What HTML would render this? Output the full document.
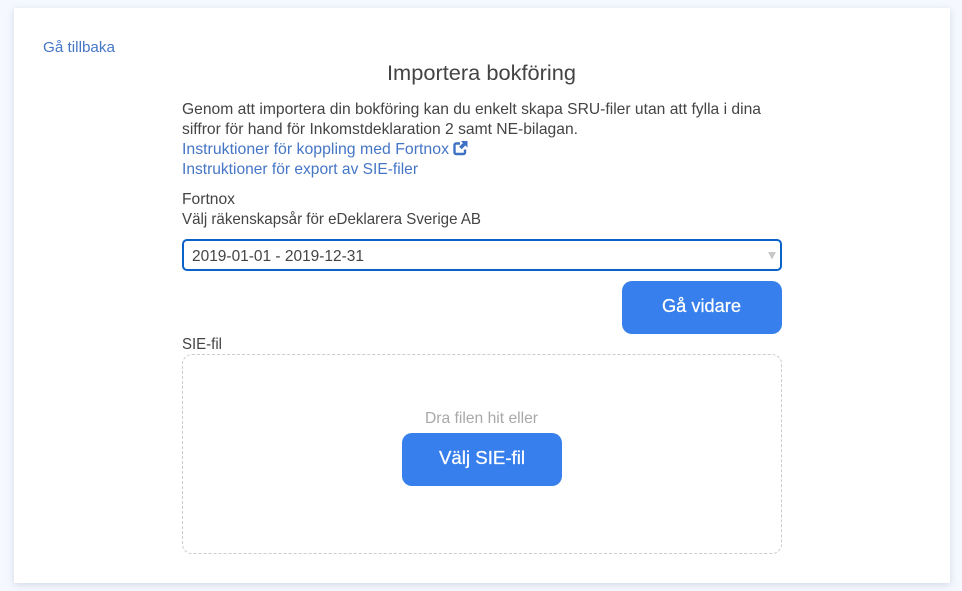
<!DOCTYPE html>
<html lang="sv">
<head>
<meta charset="utf-8">
<title>Importera bokföring</title>
<style>
html,body{margin:0;padding:0;width:962px;height:591px;overflow:hidden;background:#f5f8ff}
#card{position:absolute;left:14px;top:8px;width:936px;height:575px;background:#fff;box-shadow:0 2px 7px rgba(120,130,150,.26)}
#sel{position:absolute;left:182px;top:239px;width:596px;height:28px;border:2px solid #0a62c9;border-radius:5px;background:#fff}
.btn{position:absolute;width:160px;height:53px;background:#377fec;border-radius:10px}
#drop{position:absolute;left:182px;top:354px;width:598px;height:198px;border:1px dashed #ccc;border-radius:10px}
svg{position:absolute;left:0;top:0}
text{font-family:"Liberation Sans",sans-serif;font-size:16px;fill:#444}
.l{fill:#4576c6}
.w{font-size:18px;fill:#fff;stroke:#fff;stroke-width:.25px}
</style>
</head>
<body>
<div id="card"></div>
<div id="sel"></div>
<div class="btn" style="left:622px;top:281px"></div>
<div id="drop"></div>
<div class="btn" style="left:402px;top:433px"></div>
<svg width="962" height="591" viewBox="0 0 962 591">
<text class="l" x="43" y="52" style="font-size:15px" textLength="72" lengthAdjust="spacingAndGlyphs">Gå tillbaka</text>
<text x="387" y="80" style="font-size:21px" textLength="189" lengthAdjust="spacingAndGlyphs">Importera bokföring</text>
<text x="182" y="114" textLength="579" lengthAdjust="spacingAndGlyphs">Genom att importera din bokföring kan du enkelt skapa SRU-filer utan att fylla i dina</text>
<text x="182" y="134" textLength="396" lengthAdjust="spacingAndGlyphs">siffror för hand för Inkomstdeklaration 2 samt NE-bilagan.</text>
<text class="l" x="182" y="154" textLength="267" lengthAdjust="spacingAndGlyphs">Instruktioner för koppling med Fortnox</text>
<path d="M460 143.500h-4a1.500 1.500 0 0 0-1.500 1.500v7.500a1.500 1.500 0 0 0 1.500 1.500h7.500a1.500 1.500 0 0 0 1.500-1.500v-3" fill="none" stroke="#3f72c4" stroke-width="2.400"/>
<path d="M461 141h6.500v6.500l-2.200-2-3.600 3.800-2.600-2.600 3.800-3.600z" fill="#3f72c4"/>
<text class="l" x="182" y="174" textLength="236" lengthAdjust="spacingAndGlyphs">Instruktioner för export av SIE-filer</text>
<text x="182" y="204" textLength="53" lengthAdjust="spacingAndGlyphs">Fortnox</text>
<text x="182" y="224" textLength="299" lengthAdjust="spacingAndGlyphs">Välj räkenskapsår för eDeklarera Sverige AB</text>
<text x="192" y="261" textLength="172" lengthAdjust="spacingAndGlyphs">2019-01-01 - 2019-12-31</text>
<path d="M768 252h8l-4 7.500z" fill="#c8c8c8"/>
<text class="w" x="662" y="312" textLength="79" lengthAdjust="spacingAndGlyphs">Gå vidare</text>
<text x="182" y="349" textLength="40" lengthAdjust="spacingAndGlyphs">SIE-fil</text>
<text x="425" y="423" style="fill:#a8a8a8" textLength="113" lengthAdjust="spacingAndGlyphs">Dra filen hit eller</text>
<text class="w" x="439" y="464" textLength="86" lengthAdjust="spacingAndGlyphs">Välj SIE-fil</text>
</svg>
</body>
</html>
